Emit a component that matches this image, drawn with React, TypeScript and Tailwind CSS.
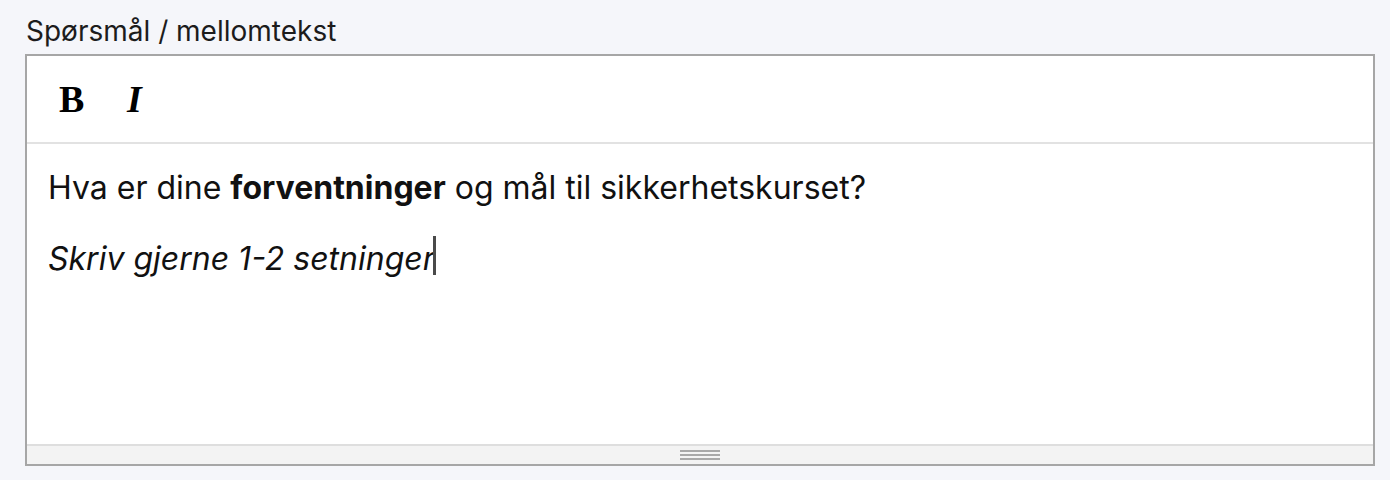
import React from "react";

export default function App() {
  return (
    <div className="w-[1390px] h-[480px] bg-[#f5f6fa] pt-[13px] pl-[25px] pr-[15px]" style={{ fontFamily: "Inter, 'Noto Sans', sans-serif" }}>
      <div className="text-[28px] leading-[36px] text-[#1c1c1c] pl-[1px] mb-[5px] whitespace-nowrap">Spørsmål / mellomtekst</div>
      <div className="w-[1350px] h-[412px] border-2 border-[#a6a6a6] bg-white flex flex-col">
        <div className="h-[86px] flex items-center pl-[32px] border-b-2 border-[#e2e2e2] box-content" style={{ fontFamily: "'Liberation Serif', serif" }}>
          <button className="text-[38px] font-bold text-black leading-none w-[68px] text-left">B</button>
          <button className="text-[38px] font-bold italic text-black leading-none w-[20px] text-left">I</button>
        </div>
        <div className="flex-1 pt-[20px] pl-[21px] text-[32px] text-[#111] leading-[48px]">
          <p className="mb-[23px] whitespace-nowrap">
            Hva er dine <strong className="font-bold">forventninger</strong> og mål til sikkerhetskurset?
          </p>
          <p className="italic whitespace-nowrap">
            Skriv gjerne 1-2 setninger<span className="inline-block w-[3px] h-[39px] bg-[#4a4a4a] align-[-5px] ml-[-2px]"></span>
          </p>
        </div>
        <div className="h-[20px] bg-[#f3f3f3] border-t-2 border-[#dedede] flex items-center justify-center">
          <div className="flex flex-col gap-[2px] w-[40px]">
            <div className="h-[2px] bg-[#a8a8a8]"></div>
            <div className="h-[2px] bg-[#a8a8a8]"></div>
            <div className="h-[2px] bg-[#a8a8a8]"></div>
          </div>
        </div>
      </div>
    </div>
  );
}
